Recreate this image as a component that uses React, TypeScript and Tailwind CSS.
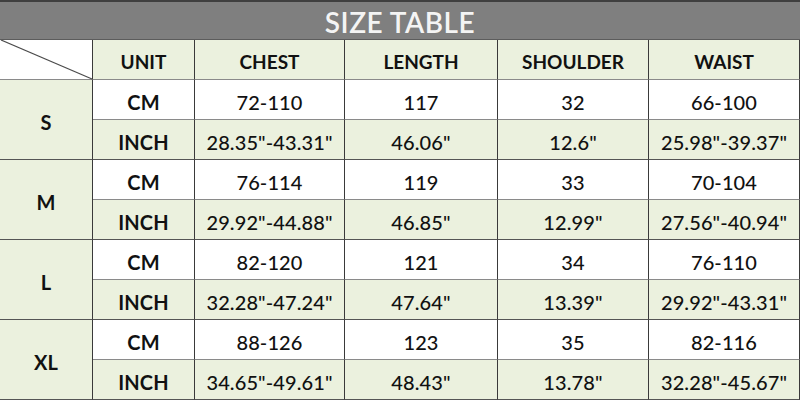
const HEAD = ["UNIT", "CHEST", "LENGTH", "SHOULDER", "WAIST"];

const SIZES = [
	{ size: "S", cm: ["72-110", "117", "32", "66-100"], inch: ['28.35"-43.31"', '46.06"', '12.6"', '25.98"-39.37"'] },
	{ size: "M", cm: ["76-114", "119", "33", "70-104"], inch: ['29.92"-44.88"', '46.85"', '12.99"', '27.56"-40.94"'] },
	{ size: "L", cm: ["82-120", "121", "34", "76-110"], inch: ['32.28"-47.24"', '47.64"', '13.39"', '29.92"-43.31"'] },
	{ size: "XL", cm: ["88-126", "123", "35", "82-116"], inch: ['34.65"-49.61"', '48.43"', '13.78"', '32.28"-45.67"'] },
];

const cell = "flex items-center justify-center pt-[5px] border-r border-b border-r-[#3a3a3a] border-b-[#8a8a8a]";

export default function App() {
	return (
		<div
			className="w-[800px] h-[400px] overflow-hidden bg-white text-[#111]"
			style={{ fontFamily: "Lato, 'Open Sans', sans-serif" }}
		>
			<div className="h-[40px] flex items-center justify-center pt-[3px] bg-[#7f7f7f] border-t-2 border-t-[#3f3f3f] border-b border-b-[#5c5c5c]">
				<span className="text-[28px] font-semibold tracking-[0.5px] text-[#f4f4f4] leading-none">SIZE TABLE</span>
			</div>
			<div className="grid grid-cols-[93px_102px_150px_153px_151px_151px] grid-rows-[40px_repeat(8,40px)] text-[20px] font-medium tracking-[0.1px]">
				<div className={`${cell} relative bg-white`}>
					<svg className="absolute inset-0" width="93" height="40" viewBox="0 0 93 40">
						<line x1="1" y1="0" x2="92" y2="39" stroke="#4a4a4a" strokeWidth="1.2" />
					</svg>
				</div>
				{HEAD.map((h) => (
					<div key={h} className={`${cell} bg-[#ebf1de] font-bold text-[19px] tracking-normal`}>
						{h}
					</div>
				))}
				{SIZES.map((s) => (
					<>
						<div key={s.size} className={`${cell} row-span-2 bg-[#ebf1de] font-bold text-[20px] border-b-[#555]`}>
							{s.size}
						</div>
						<div className={`${cell} bg-white font-bold`}>CM</div>
						{s.cm.map((v, i) => (
							<div key={"c" + i} className={`${cell} bg-white`}>
								{v}
							</div>
						))}
						<div className={`${cell} bg-[#ebf1de] font-bold border-b-[#555]`}>INCH</div>
						{s.inch.map((v, i) => (
							<div key={"i" + i} className={`${cell} bg-[#ebf1de] border-b-[#555]`}>
								{v}
							</div>
						))}
					</>
				))}
			</div>
		</div>
	);
}
